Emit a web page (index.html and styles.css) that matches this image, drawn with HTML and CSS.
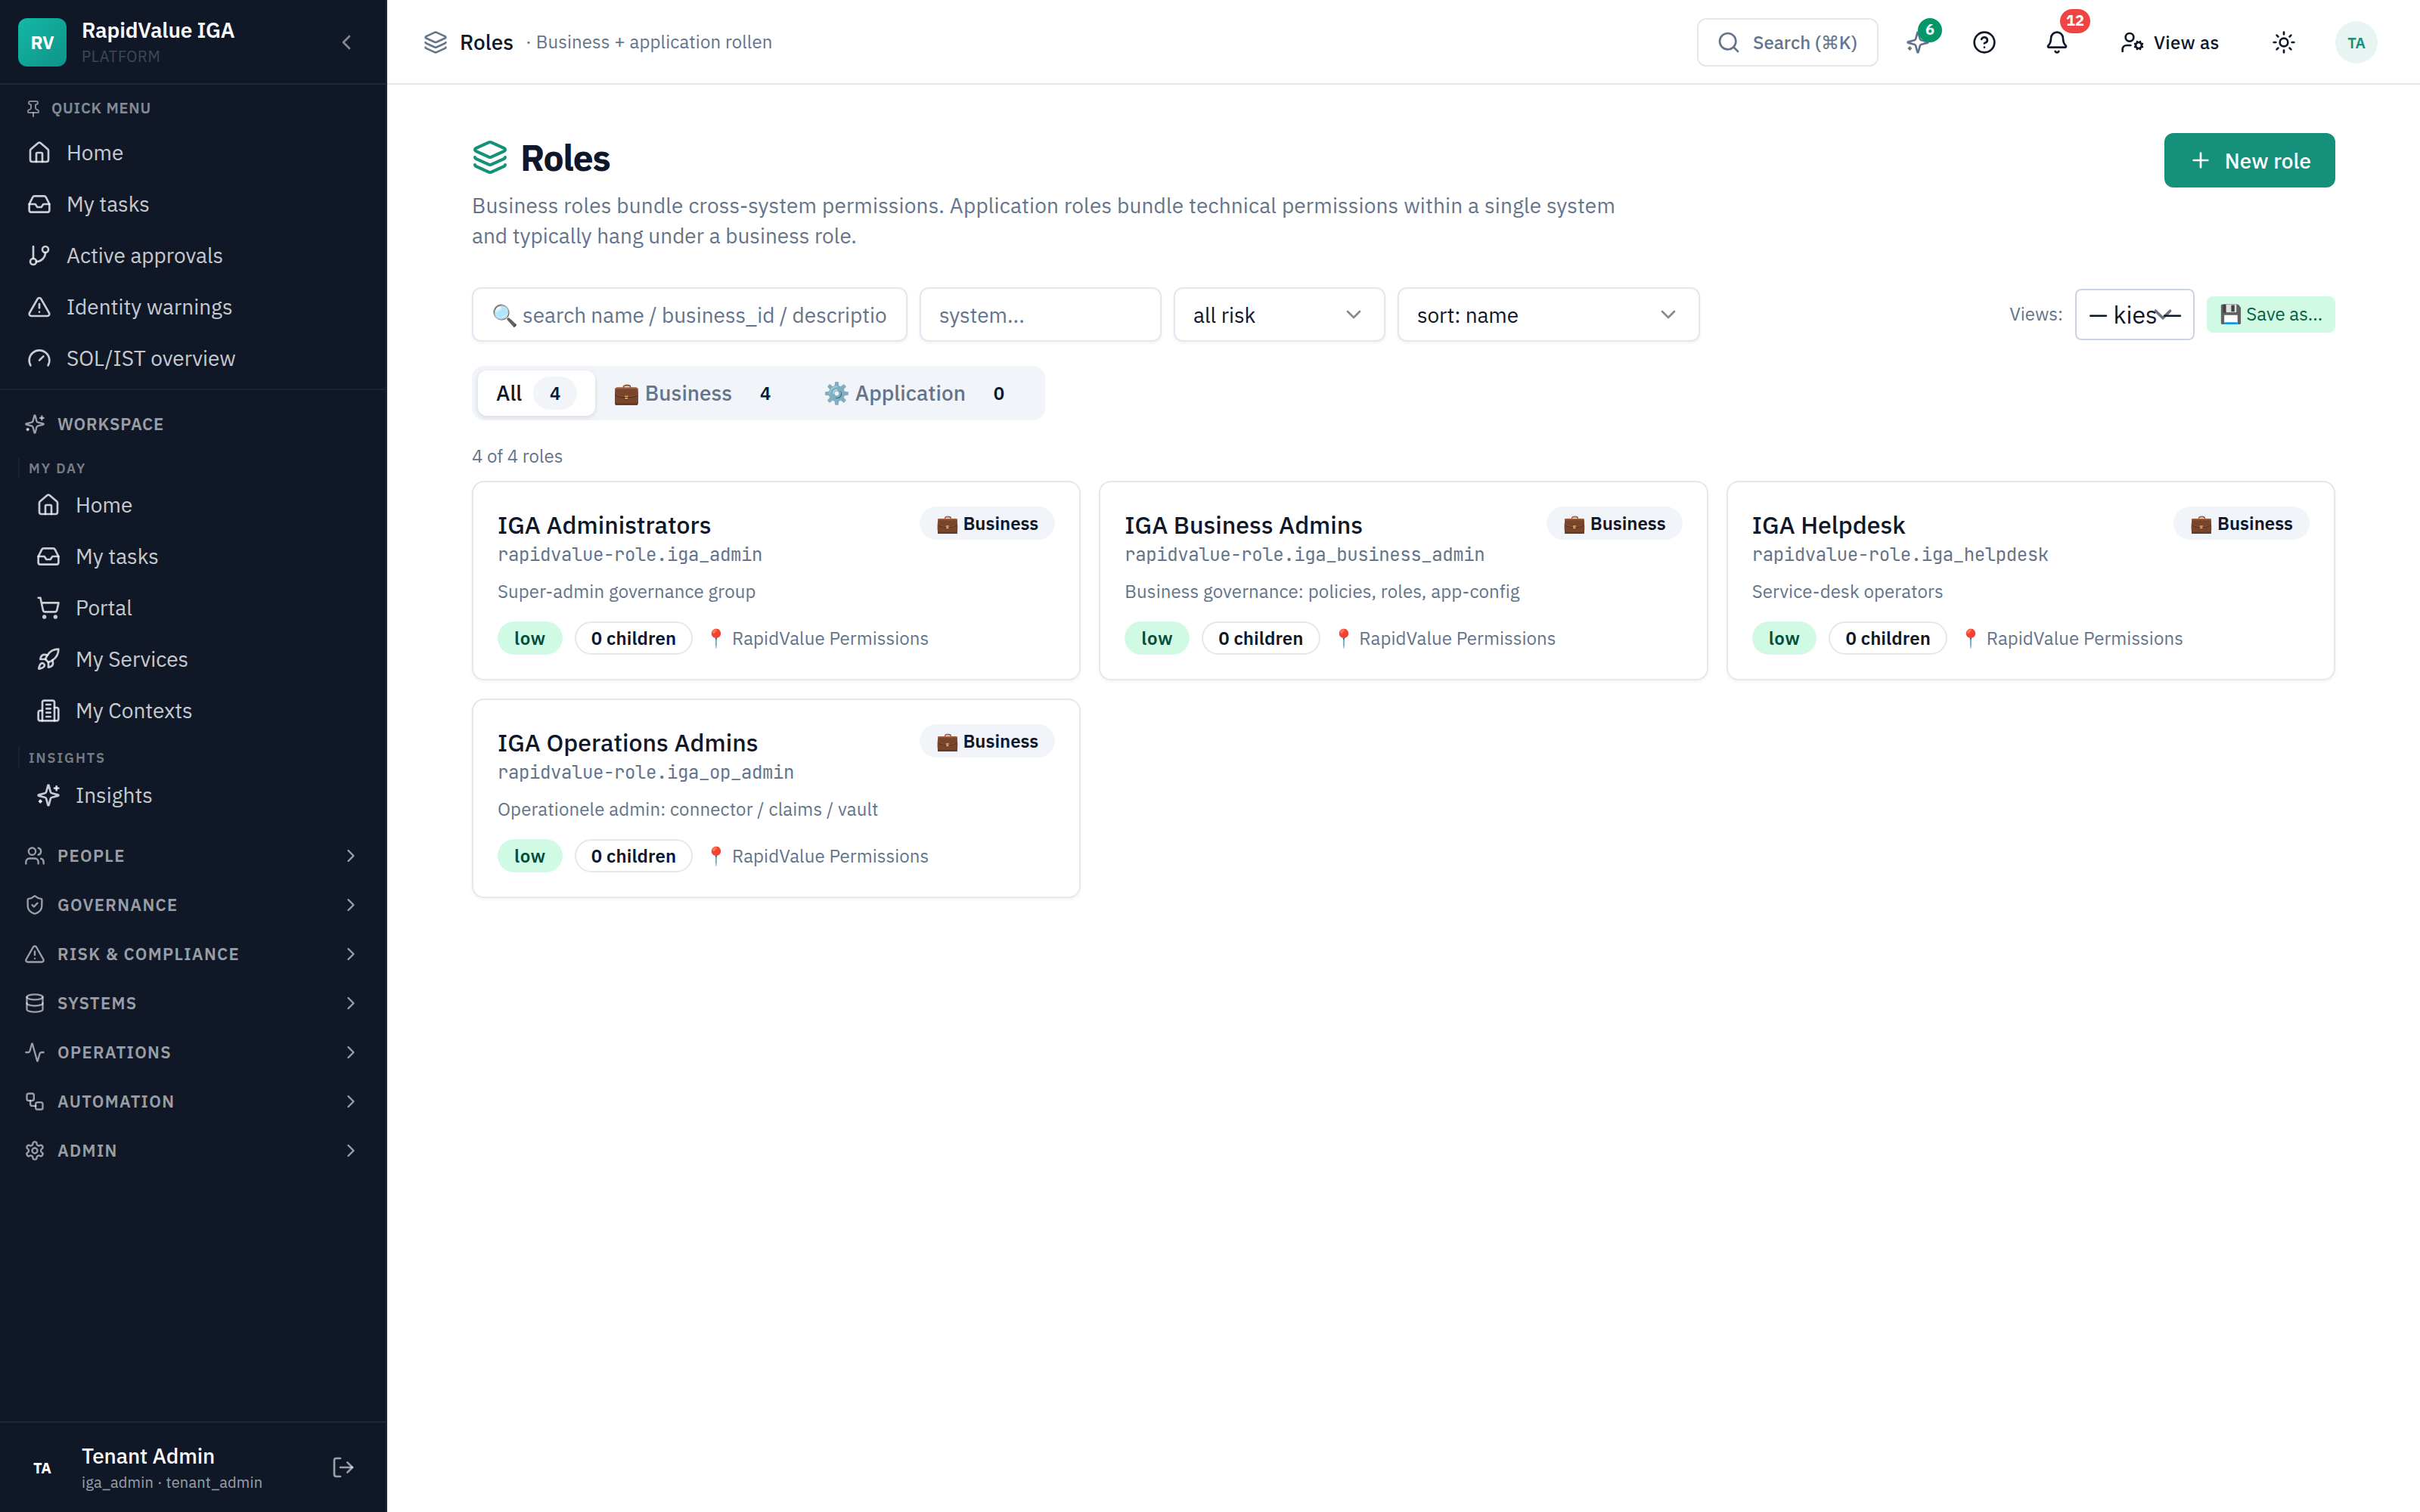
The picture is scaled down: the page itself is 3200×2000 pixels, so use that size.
FILE: index.html
```html
<!DOCTYPE html>
<html lang="en">
<head>
    <meta charset="UTF-8">
    <meta name="viewport" content="width=device-width, initial-scale=1.0">
    <title>Roles - RapidValue IGA</title>
    <link rel="stylesheet" href="styles.css">
</head>
<body>

<!-- Icon sprite -->
<svg class="sprite" xmlns="http://www.w3.org/2000/svg">
    <symbol id="layers" viewBox="0 0 24 24"><path d="M12.83 2.18a2 2 0 0 0-1.66 0L2.6 6.08a1 1 0 0 0 0 1.83l8.58 3.91a2 2 0 0 0 1.66 0l8.58-3.9a1 1 0 0 0 0-1.83z"/><path d="M2 12a1 1 0 0 0 .58.91l8.6 3.91a2 2 0 0 0 1.65 0l8.58-3.9A1 1 0 0 0 22 12"/><path d="M2 17a1 1 0 0 0 .58.91l8.6 3.91a2 2 0 0 0 1.65 0l8.58-3.9A1 1 0 0 0 22 17"/></symbol>
    <symbol id="pin" viewBox="0 0 24 24"><path d="M12 17v5"/><path d="M9 10.76a2 2 0 0 1-1.11 1.79l-1.78.9A2 2 0 0 0 5 15.24V16a1 1 0 0 0 1 1h12a1 1 0 0 0 1-1v-.76a2 2 0 0 0-1.11-1.79l-1.78-.9A2 2 0 0 1 15 10.76V7a1 1 0 0 1 1-1 2 2 0 0 0 0-4H8a2 2 0 0 0 0 4 1 1 0 0 1 1 1z"/></symbol>
    <symbol id="home" viewBox="0 0 24 24"><path d="M15 21v-8a1 1 0 0 0-1-1h-4a1 1 0 0 0-1 1v8"/><path d="M3 10a2 2 0 0 1 .709-1.528l7-5.999a2 2 0 0 1 2.582 0l7 5.999A2 2 0 0 1 21 10v9a2 2 0 0 1-2 2H5a2 2 0 0 1-2-2z"/></symbol>
    <symbol id="inbox" viewBox="0 0 24 24"><polyline points="22 12 16 12 14 15 10 15 8 12 2 12"/><path d="M5.45 5.11 2 12v6a2 2 0 0 0 2 2h16a2 2 0 0 0 2-2v-6l-3.45-6.89A2 2 0 0 0 16.76 4H7.24a2 2 0 0 0-1.79 1.11z"/></symbol>
    <symbol id="branch" viewBox="0 0 24 24"><line x1="6" x2="6" y1="3" y2="15"/><circle cx="18" cy="6" r="3"/><circle cx="6" cy="18" r="3"/><path d="M18 9a9 9 0 0 1-9 9"/></symbol>
    <symbol id="alert" viewBox="0 0 24 24"><path d="m21.73 18-8-14a2 2 0 0 0-3.48 0l-8 14A2 2 0 0 0 4 21h16a2 2 0 0 0 1.73-3"/><path d="M12 9v4"/><path d="M12 17h.01"/></symbol>
    <symbol id="gauge" viewBox="0 0 24 24"><path d="m12 14 4-4"/><path d="M3.34 19a10 10 0 1 1 17.32 0"/></symbol>
    <symbol id="sparkles" viewBox="0 0 24 24"><path d="M9.937 15.5A2 2 0 0 0 8.5 14.063l-6.135-1.582a.5.5 0 0 1 0-.962L8.5 9.936A2 2 0 0 0 9.937 8.5l1.582-6.135a.5.5 0 0 1 .963 0L14.063 8.5A2 2 0 0 0 15.5 9.937l6.135 1.581a.5.5 0 0 1 0 .964L15.5 14.063a2 2 0 0 0-1.437 1.437l-1.582 6.135a.5.5 0 0 1-.963 0z"/><path d="M20 3v4"/><path d="M22 5h-4"/><path d="M4 17v2"/><path d="M5 18H3"/></symbol>
    <symbol id="cart" viewBox="0 0 24 24"><circle cx="8" cy="21" r="1"/><circle cx="19" cy="21" r="1"/><path d="M2.05 2.05h2l2.66 12.42a2 2 0 0 0 2 1.58h9.78a2 2 0 0 0 1.95-1.57l1.65-7.43H5.12"/></symbol>
    <symbol id="rocket" viewBox="0 0 24 24"><path d="M4.5 16.5c-1.5 1.26-2 5-2 5s3.74-.5 5-2c.71-.84.7-2.13-.09-2.91a2.18 2.18 0 0 0-2.91-.09z"/><path d="m12 15-3-3a22 22 0 0 1 2-3.95A12.88 12.88 0 0 1 22 2c0 2.72-.78 7.5-6 11a22.35 22.35 0 0 1-4 2z"/><path d="M9 12H4s.55-3.03 2-4c1.62-1.08 5 0 5 0"/><path d="M12 15v5s3.03-.55 4-2c1.08-1.62 0-5 0-5"/></symbol>
    <symbol id="building" viewBox="0 0 24 24"><path d="M6 22V4a2 2 0 0 1 2-2h8a2 2 0 0 1 2 2v18Z"/><path d="M6 12H4a2 2 0 0 0-2 2v6a2 2 0 0 0 2 2h2"/><path d="M18 9h2a2 2 0 0 1 2 2v9a2 2 0 0 1-2 2h-2"/><path d="M10 6h4"/><path d="M10 10h4"/><path d="M10 14h4"/><path d="M10 18h4"/></symbol>
    <symbol id="users" viewBox="0 0 24 24"><path d="M16 21v-2a4 4 0 0 0-4-4H6a4 4 0 0 0-4 4v2"/><circle cx="9" cy="7" r="4"/><path d="M22 21v-2a4 4 0 0 0-3-3.87"/><path d="M16 3.13a4 4 0 0 1 0 7.75"/></symbol>
    <symbol id="shield" viewBox="0 0 24 24"><path d="M20 13c0 5-3.5 7.5-7.66 8.95a1 1 0 0 1-.67-.01C7.5 20.5 4 18 4 13V6a1 1 0 0 1 1-1c2 0 4.5-1.2 6.24-2.72a1.17 1.17 0 0 1 1.52 0C14.51 3.81 17 5 19 5a1 1 0 0 1 1 1z"/><path d="m9 12 2 2 4-4"/></symbol>
    <symbol id="database" viewBox="0 0 24 24"><ellipse cx="12" cy="5" rx="9" ry="3"/><path d="M3 5V19A9 3 0 0 0 21 19V5"/><path d="M3 12A9 3 0 0 0 21 12"/></symbol>
    <symbol id="activity" viewBox="0 0 24 24"><path d="M22 12h-2.48a2 2 0 0 0-1.93 1.46l-2.35 8.36a.25.25 0 0 1-.48 0L9.24 2.18a.25.25 0 0 0-.48 0l-2.35 8.36A2 2 0 0 1 4.49 12H2"/></symbol>
    <symbol id="workflow" viewBox="0 0 24 24"><rect width="8" height="8" x="3" y="3" rx="2"/><path d="M7 11v4a2 2 0 0 0 2 2h4"/><rect width="8" height="8" x="13" y="13" rx="2"/></symbol>
    <symbol id="settings" viewBox="0 0 24 24"><path d="M12.22 2h-.44a2 2 0 0 0-2 2v.18a2 2 0 0 1-1 1.73l-.43.25a2 2 0 0 1-2 0l-.15-.08a2 2 0 0 0-2.73.73l-.22.38a2 2 0 0 0 .73 2.73l.15.1a2 2 0 0 1 1 1.72v.51a2 2 0 0 1-1 1.74l-.15.09a2 2 0 0 0-.73 2.73l.22.38a2 2 0 0 0 2.73.73l.15-.08a2 2 0 0 1 2 0l.43.25a2 2 0 0 1 1 1.73V20a2 2 0 0 0 2 2h.44a2 2 0 0 0 2-2v-.18a2 2 0 0 1 1-1.73l.43-.25a2 2 0 0 1 2 0l.15.08a2 2 0 0 0 2.73-.73l.22-.39a2 2 0 0 0-.73-2.73l-.15-.08a2 2 0 0 1-1-1.74v-.5a2 2 0 0 1 1-1.74l.15-.09a2 2 0 0 0 .73-2.73l-.22-.38a2 2 0 0 0-2.73-.73l-.15.08a2 2 0 0 1-2 0l-.43-.25a2 2 0 0 1-1-1.73V4a2 2 0 0 0-2-2z"/><circle cx="12" cy="12" r="3"/></symbol>
    <symbol id="logout" viewBox="0 0 24 24"><path d="M9 21H5a2 2 0 0 1-2-2V5a2 2 0 0 1 2-2h4"/><polyline points="16 17 21 12 16 7"/><line x1="21" x2="9" y1="12" y2="12"/></symbol>
    <symbol id="search" viewBox="0 0 24 24"><circle cx="11" cy="11" r="8"/><path d="m21 21-4.3-4.3"/></symbol>
    <symbol id="help" viewBox="0 0 24 24"><circle cx="12" cy="12" r="10"/><path d="M9.09 9a3 3 0 0 1 5.83 1c0 2-3 3-3 3"/><path d="M12 17h.01"/></symbol>
    <symbol id="bell" viewBox="0 0 24 24"><path d="M10.268 21a2 2 0 0 0 3.464 0"/><path d="M3.262 15.326A1 1 0 0 0 4 17h16a1 1 0 0 0 .74-1.673C19.41 13.956 18 12.499 18 8A6 6 0 0 0 6 8c0 4.499-1.411 5.956-2.738 7.326"/></symbol>
    <symbol id="user-cog" viewBox="0 0 24 24"><path d="M10 15H6a4 4 0 0 0-4 4v2"/><circle cx="9" cy="7" r="4"/><circle cx="18" cy="15" r="3"/><path d="m14.305 16.53.923-.382"/><path d="m15.228 13.852-.923-.383"/><path d="m16.852 12.228-.383-.923"/><path d="m16.852 17.772-.383.924"/><path d="m19.148 12.228.383-.923"/><path d="m19.53 18.696-.382-.924"/><path d="m20.772 13.852.924-.383"/><path d="m20.772 16.148.924.383"/></symbol>
    <symbol id="sun" viewBox="0 0 24 24"><circle cx="12" cy="12" r="4"/><path d="M12 2v2"/><path d="M12 20v2"/><path d="m4.93 4.93 1.41 1.41"/><path d="m17.66 17.66 1.41 1.41"/><path d="M2 12h2"/><path d="M20 12h2"/><path d="m6.34 17.66-1.41 1.41"/><path d="m19.07 4.93-1.41 1.41"/></symbol>
    <symbol id="plus" viewBox="0 0 24 24"><path d="M5 12h14"/><path d="M12 5v14"/></symbol>
    <symbol id="left" viewBox="0 0 24 24"><path d="m15 18-6-6 6-6"/></symbol>
    <symbol id="right" viewBox="0 0 24 24"><path d="m9 18 6-6-6-6"/></symbol>
    <symbol id="down" viewBox="0 0 24 24"><path d="m6 9 6 6 6-6"/></symbol>
</svg>

<div class="app">
    <aside class="sidebar">
        <div class="brand">
            <div class="brand-logo">RV</div>
            <div class="brand-text">
                <div class="brand-name">RapidValue IGA</div>
                <div class="brand-sub">PLATFORM</div>
            </div>
            <svg class="icon brand-toggle"><use href="#left"/></svg>
        </div>

        <div class="quick">
            <div class="quick-label"><svg class="icon icon-xs"><use href="#pin"/></svg>QUICK MENU</div>
            <a class="nav-item"><svg class="icon"><use href="#home"/></svg>Home</a>
            <a class="nav-item"><svg class="icon"><use href="#inbox"/></svg>My tasks</a>
            <a class="nav-item"><svg class="icon"><use href="#branch"/></svg>Active approvals</a>
            <a class="nav-item"><svg class="icon"><use href="#alert"/></svg>Identity warnings</a>
            <a class="nav-item"><svg class="icon"><use href="#gauge"/></svg>SOL/IST overview</a>
        </div>

        <nav class="nav">
            <div class="nav-head open"><svg class="icon icon-sm"><use href="#sparkles"/></svg>WORKSPACE</div>
            <div class="nav-group">
                <div class="nav-label first">MY DAY</div>
                <a class="nav-item"><svg class="icon"><use href="#home"/></svg>Home</a>
                <a class="nav-item"><svg class="icon"><use href="#inbox"/></svg>My tasks</a>
                <a class="nav-item"><svg class="icon"><use href="#cart"/></svg>Portal</a>
                <a class="nav-item"><svg class="icon"><use href="#rocket"/></svg>My Services</a>
                <a class="nav-item"><svg class="icon"><use href="#building"/></svg>My Contexts</a>
                <div class="nav-label">INSIGHTS</div>
                <a class="nav-item"><svg class="icon"><use href="#sparkles"/></svg>Insights</a>
            </div>
            <div class="nav-head"><svg class="icon icon-sm"><use href="#users"/></svg>PEOPLE<svg class="icon icon-sm arrow"><use href="#right"/></svg></div>
            <div class="nav-head"><svg class="icon icon-sm"><use href="#shield"/></svg>GOVERNANCE<svg class="icon icon-sm arrow"><use href="#right"/></svg></div>
            <div class="nav-head"><svg class="icon icon-sm"><use href="#alert"/></svg>RISK &amp; COMPLIANCE<svg class="icon icon-sm arrow"><use href="#right"/></svg></div>
            <div class="nav-head"><svg class="icon icon-sm"><use href="#database"/></svg>SYSTEMS<svg class="icon icon-sm arrow"><use href="#right"/></svg></div>
            <div class="nav-head"><svg class="icon icon-sm"><use href="#activity"/></svg>OPERATIONS<svg class="icon icon-sm arrow"><use href="#right"/></svg></div>
            <div class="nav-head"><svg class="icon icon-sm"><use href="#workflow"/></svg>AUTOMATION<svg class="icon icon-sm arrow"><use href="#right"/></svg></div>
            <div class="nav-head"><svg class="icon icon-sm"><use href="#settings"/></svg>ADMIN<svg class="icon icon-sm arrow"><use href="#right"/></svg></div>
        </nav>

        <div class="user">
            <div class="user-avatar">TA</div>
            <div class="user-text">
                <div class="user-name">Tenant Admin</div>
                <div class="user-sub">iga_admin · tenant_admin</div>
            </div>
            <svg class="icon user-logout"><use href="#logout"/></svg>
        </div>
    </aside>

    <div class="main">
        <header class="topbar">
            <svg class="icon topbar-icon"><use href="#layers"/></svg>
            <span class="topbar-title">Roles</span>
            <span class="topbar-sub">· Business + application rollen</span>
            <div class="topbar-actions">
                <button class="search"><svg class="icon"><use href="#search"/></svg>Search (⌘K)</button>
                <button class="icon-btn ai"><svg class="icon"><use href="#sparkles"/></svg><span class="count green">6</span></button>
                <button class="icon-btn"><svg class="icon"><use href="#help"/></svg></button>
                <button class="icon-btn"><svg class="icon"><use href="#bell"/></svg><span class="count red">12</span></button>
                <button class="view-as"><svg class="icon"><use href="#user-cog"/></svg>View as</button>
                <button class="icon-btn"><svg class="icon"><use href="#sun"/></svg></button>
                <div class="avatar">TA</div>
            </div>
        </header>

        <main class="content">
            <div class="page-head">
                <div>
                    <h1><svg class="icon icon-lg"><use href="#layers"/></svg>Roles</h1>
                    <p class="lead"><span class="lead-first">Business roles bundle cross-system permissions. Application roles bundle technical permissions within a single system</span> and typically hang under a business role.</p>
                </div>
                <button class="btn-primary"><svg class="icon"><use href="#plus"/></svg>New role</button>
            </div>

            <div class="filters">
                <input class="field field-search" type="text" placeholder="🔍 search name / business_id / description...">
                <input class="field field-system" type="text" placeholder="system...">
                <div class="field field-risk">all risk<svg class="icon"><use href="#down"/></svg></div>
                <div class="field field-sort">sort: name<svg class="icon"><use href="#down"/></svg></div>
                <div class="views">
                    <span class="views-label">Views:</span>
                    <div class="views-select">
                        <svg class="views-arrow" viewBox="0 0 20 20"><path d="M6 8l4 4 4-4"/></svg>
                        <span>— kies —</span>
                    </div>
                    <button class="btn-save">💾 Save as...</button>
                </div>
            </div>

            <div class="tabs">
                <button class="tab active">All<span class="pill muted">4</span></button>
                <button class="tab">💼 Business<span class="pill muted">4</span></button>
                <button class="tab">⚙️ Application<span class="pill muted">0</span></button>
            </div>

            <p class="total">4 of 4 roles</p>

            <div class="cards">
                <div class="card">
                    <div class="card-head"><h3>IGA Administrators</h3><span class="pill muted">💼 Business</span></div>
                    <div class="card-id">rapidvalue-role.iga_admin</div>
                    <p class="card-desc">Super-admin governance group</p>
                    <div class="card-meta"><span class="pill low">low</span><span class="pill outline">0 children</span><span>📍 RapidValue Permissions</span></div>
                </div>
                <div class="card">
                    <div class="card-head"><h3>IGA Business Admins</h3><span class="pill muted">💼 Business</span></div>
                    <div class="card-id">rapidvalue-role.iga_business_admin</div>
                    <p class="card-desc">Business governance: policies, roles, app-config</p>
                    <div class="card-meta"><span class="pill low">low</span><span class="pill outline">0 children</span><span>📍 RapidValue Permissions</span></div>
                </div>
                <div class="card">
                    <div class="card-head"><h3>IGA Helpdesk</h3><span class="pill muted">💼 Business</span></div>
                    <div class="card-id">rapidvalue-role.iga_helpdesk</div>
                    <p class="card-desc">Service-desk operators</p>
                    <div class="card-meta"><span class="pill low">low</span><span class="pill outline">0 children</span><span>📍 RapidValue Permissions</span></div>
                </div>
                <div class="card">
                    <div class="card-head"><h3>IGA Operations Admins</h3><span class="pill muted">💼 Business</span></div>
                    <div class="card-id">rapidvalue-role.iga_op_admin</div>
                    <p class="card-desc">Operationele admin: connector / claims / vault</p>
                    <div class="card-meta"><span class="pill low">low</span><span class="pill outline">0 children</span><span>📍 RapidValue Permissions</span></div>
                </div>
            </div>
        </main>
    </div>
</div>

</body>
</html>
```
FILE: styles.css
```css
* { box-sizing: border-box; }
body { margin: 0; font-family: "IBM Plex Sans", "Noto Sans", sans-serif; font-size: 28px; color: #0f172a; background: #fff; }
h1, h3, p { margin: 0; }
button, input { font: inherit; color: inherit; border: none; background: none; padding: 0; margin: 0; }
.sprite { display: none; }
.icon { width: 32px; height: 32px; flex: none; fill: none; stroke: currentColor; stroke-width: 2; stroke-linecap: round; stroke-linejoin: round; }
.icon-xs { width: 24px; height: 24px; }
.icon-sm { width: 28px; height: 28px; }
.icon-lg { width: 48px; height: 48px; color: #14907b; }

.app { display: flex; height: 2000px; }

/* Sidebar */
.sidebar { width: 512px; flex: none; display: flex; flex-direction: column; background: #101828; border-right: 2px solid #1e293b; color: rgba(248, 250, 252, 0.8); }
.brand { height: 112px; display: flex; align-items: center; gap: 20px; padding: 2px 36px 0 24px; border-bottom: 2px solid #1e293b; }
.brand-logo { width: 64px; height: 64px; border-radius: 12px; background: linear-gradient(135deg, #14b8a6, #0d9488); color: #fff; font-size: 24px; font-weight: 700; display: flex; align-items: center; justify-content: center; }
.brand-text, .user-text { flex: 1; }
.brand-text { margin-top: -2px; }
.brand-name { font-weight: 600; line-height: 40px; letter-spacing: -0.2px; color: #f8fafc; }
.brand-sub { font-size: 20px; line-height: 30px; letter-spacing: 0.6px; color: #3d485b; }
.brand-toggle { color: rgba(248, 250, 252, 0.5); }

.quick { padding: 16px 0 6px; border-bottom: 2px solid #192335; }
.quick-label { height: 32px; margin-bottom: 8px; padding: 0 0 3px 32px; display: flex; align-items: center; gap: 12px; font-size: 20px; font-weight: 600; letter-spacing: 0.04em; color: rgba(248, 250, 252, 0.5); }
.quick-label .icon { margin-top: 2px; }
.nav-item { height: 68px; padding: 0 0 2px 36px; display: flex; align-items: center; gap: 20px; }
.nav-item .icon { margin-top: 2px; }

.nav { flex: 1; padding-top: 12px; }
.nav-head { height: 65px; padding: 0 32px; display: flex; align-items: center; gap: 16px; font-size: 22px; font-weight: 600; letter-spacing: 0.06em; color: rgba(248, 250, 252, 0.6); }
.nav-head.open { letter-spacing: 0.04em; }
.nav-head .arrow { margin-left: auto; }
.nav-group { padding: 13px 0; }
.nav-group .nav-item { padding-left: 48px; }
.nav-label { height: 28px; margin: 14px 0 2px 24px; padding-left: 12px; display: flex; align-items: center; border-left: 2px solid #192335; font-size: 18px; font-weight: 600; letter-spacing: 0.11em; color: rgba(248, 250, 252, 0.45); }
.nav-label.first { height: 26px; margin-top: 0; }

.user { height: 120px; display: flex; align-items: center; gap: 20px; padding: 0 40px 0 24px; border-top: 2px solid #1e293b; }
.user-avatar { width: 64px; color: #fff; font-size: 20px; font-weight: 700; text-align: center; }
.user-name { font-weight: 500; line-height: 40px; letter-spacing: -0.15px; color: #f8fafc; }
.user-sub { font-size: 20px; line-height: 30px; letter-spacing: 0.2px; color: rgba(248, 250, 252, 0.6); }
.user-logout { color: rgba(248, 250, 252, 0.6); }

/* Topbar */
.main { flex: 1; min-width: 0; }
.topbar { height: 112px; display: flex; align-items: center; gap: 16px; padding: 2px 56px 0 48px; border-bottom: 2px solid #e2e8f0; }
.topbar-icon { color: #64748b; }
.topbar-title { margin-top: -2px; font-weight: 500; }
.topbar-sub { margin-top: -2px; font-size: 24px; letter-spacing: 0.1px; color: #64748b; }
.topbar-actions { margin-left: auto; display: flex; align-items: center; gap: 24px; }
.search { width: 240px; height: 64px; display: flex; align-items: center; gap: 16px; padding: 0 24px; border: 2px solid #e2e8f0; border-radius: 12px; font-size: 24px; font-weight: 500; color: #64748b; white-space: nowrap; }
.icon-btn { position: relative; width: 72px; height: 64px; display: flex; align-items: center; justify-content: center; }
.icon-btn.ai { width: 56px; color: #64748b; }
.count { position: absolute; height: 32px; min-width: 32px; border-radius: 16px; color: #fff; font-size: 20px; font-weight: 700; line-height: 30px; text-align: center; }
.count.green { top: 0; right: -4px; background: #059669; }
.count.red { top: -12px; right: -8px; width: 40px; background: #ef4444; }
.view-as { width: 180px; display: flex; align-items: center; gap: 12px; padding-left: 24px; font-size: 24px; font-weight: 500; letter-spacing: 0.3px; white-space: nowrap; }
.avatar { width: 56px; height: 56px; margin-left: 8px; border-radius: 50%; background: #e7f4f2; color: #14907b; font-size: 20px; font-weight: 600; display: flex; align-items: center; justify-content: center; }

/* Page */
.content { padding: 64px 112px; }
.page-head { display: flex; justify-content: space-between; align-items: flex-start; }
h1 { display: flex; align-items: center; gap: 16px; font-size: 48px; font-weight: 700; line-height: 64px; letter-spacing: -0.025em; }
.lead { max-width: 1536px; margin-top: 12px; line-height: 40px; color: #64748b; }
.lead-first { letter-spacing: 0.165px; }
.btn-primary { height: 72px; display: flex; align-items: center; gap: 16px; padding: 0 32px; border-radius: 12px; background: #14907b; color: #fff; font-weight: 500; }

.filters { display: flex; align-items: center; gap: 16px; margin-top: 48px; }
.field { height: 72px; padding: 0 24px; display: flex; align-items: center; justify-content: space-between; border: 2px solid #e2e8f0; border-radius: 12px; box-shadow: 0 2px 4px rgba(0, 0, 0, 0.05); }
.field::placeholder { color: #64748b; opacity: 1; }
.field .icon { opacity: 0.5; }
.field-search { width: 576px; word-spacing: -0.5px; }
.field-system { width: 320px; }
.field-risk { width: 280px; }
.field-sort { width: 400px; letter-spacing: -0.1px; }
.views { margin-left: auto; display: flex; align-items: center; gap: 16px; font-size: 24px; }
.views-label { padding-bottom: 2px; color: #64748b; }
.views-select { position: relative; width: 158px; height: 68px; padding-left: 16px; border: 2px solid #cbd5e1; border-radius: 8px; font-size: 32px; line-height: 64px; white-space: nowrap; }
.views-select span { position: relative; }
.views-arrow { position: absolute; right: 16px; top: 8px; width: 48px; height: 48px; fill: none; stroke: #6b7280; stroke-width: 1.5; stroke-linecap: round; stroke-linejoin: round; }
.btn-save { width: 170px; height: 48px; padding: 0 0 2px; border-radius: 8px; background: #d1fae5; color: #065f46; white-space: nowrap; }

.tabs { display: inline-flex; margin-top: 32px; padding: 6px 8px; border-radius: 16px; background: #f1f5f9; }
.tab { height: 60px; padding: 0 24px 2px; display: flex; align-items: center; gap: 15px; border-radius: 12px; font-weight: 500; color: #64748b; }
.tab.active { background: #fff; color: #0f172a; box-shadow: 0 2px 6px rgba(0, 0, 0, 0.12); }
.tab .pill { width: 58px; margin-top: 2px; justify-content: center; }
.pill { height: 44px; display: inline-flex; align-items: center; padding: 0 20px 1px; border: 2px solid transparent; border-radius: 22px; font-size: 24px; font-weight: 600; color: #0f172a; white-space: nowrap; }
.pill.muted { background: #f1f5f9; }
.pill.low { background: #d1fae5; color: #064e3b; letter-spacing: 0.6px; }
.pill.outline { border-color: #e2e8f0; letter-spacing: 0.1px; }
.total { margin: 31px 0 17px; font-size: 24px; line-height: 32px; color: #64748b; }

.cards { display: grid; grid-template-columns: repeat(3, 1fr); gap: 24px; }
.card { height: 264px; padding: 32px; border: 2px solid #e2e8f0; border-radius: 16px; box-shadow: 0 2px 4px rgba(0, 0, 0, 0.05); }
.card-head { height: 48px; display: flex; justify-content: space-between; align-items: flex-start; }
h3 { font-size: 32px; font-weight: 500; line-height: 48px; }
.card-id { font-family: "JetBrains Mono", "DejaVu Sans Mono", monospace; font-size: 24px; line-height: 32px; letter-spacing: -0.4px; color: #64748b; }
.card-desc { margin: 16px 0 24px; font-size: 24px; line-height: 32px; letter-spacing: 0.12px; color: #64748b; }
.card-meta { display: flex; align-items: center; gap: 16px; font-size: 24px; letter-spacing: 0.08px; color: #64748b; }
```
